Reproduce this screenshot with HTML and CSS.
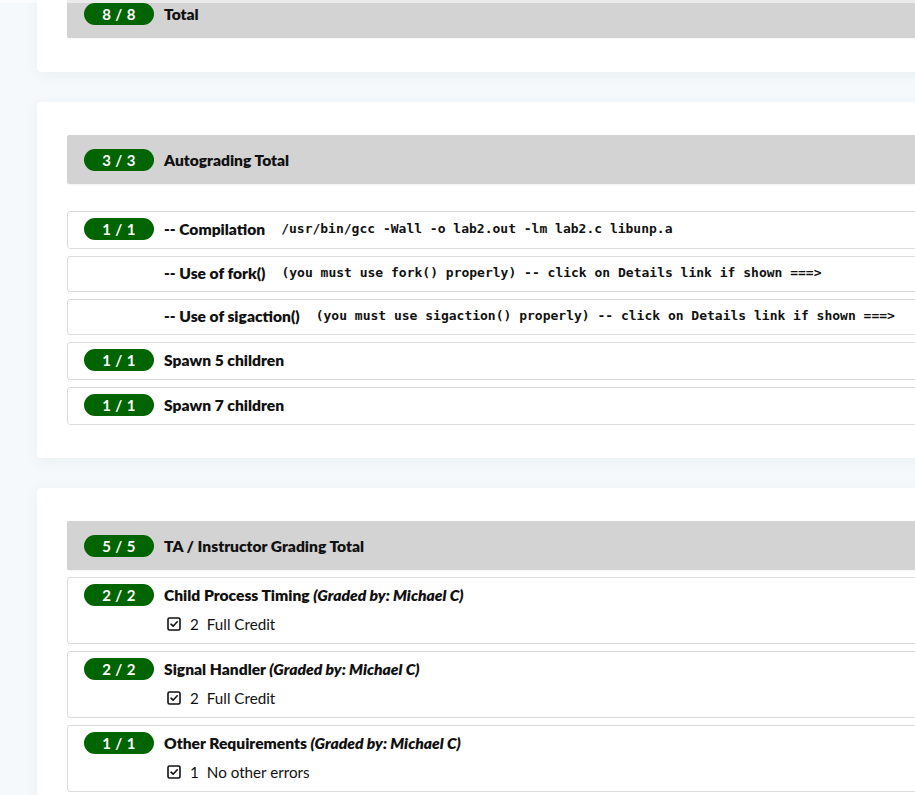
FILE: index.html
```html
<!DOCTYPE html>
<html lang="en">
<head>
<meta charset="utf-8">
<title>Grading Results</title>
<link rel="stylesheet" href="styles.css">
</head>
<body>
<div class="topedge"></div>
<main class="page">

  <section class="card card--first">
    <div class="band">
      <span class="badge">8 / 8</span>
      <span class="title">Total</span>
    </div>
  </section>

  <section class="card">
    <div class="band">
      <span class="badge">3 / 3</span>
      <span class="title">Autograding Total</span>
    </div>
    <div class="rows rows--spaced">
      <div class="row">
        <div class="head">
          <span class="badge">1 / 1</span>
          <span class="title">-- Compilation</span>
          <code class="code">/usr/bin/gcc -Wall -o lab2.out -lm lab2.c libunp.a</code>
        </div>
      </div>
      <div class="row">
        <div class="head">
          <span class="badge badge--empty"></span>
          <span class="title">-- Use of fork()</span>
          <code class="code">(you must use fork() properly) -- click on Details link if shown ===&gt;</code>
        </div>
      </div>
      <div class="row">
        <div class="head">
          <span class="badge badge--empty"></span>
          <span class="title">-- Use of sigaction()</span>
          <code class="code">(you must use sigaction() properly) -- click on Details link if shown ===&gt;</code>
        </div>
      </div>
      <div class="row">
        <div class="head">
          <span class="badge">1 / 1</span>
          <span class="title">Spawn 5 children</span>
        </div>
      </div>
      <div class="row">
        <div class="head">
          <span class="badge">1 / 1</span>
          <span class="title">Spawn 7 children</span>
        </div>
      </div>
    </div>
  </section>

  <section class="card">
    <div class="band">
      <span class="badge">5 / 5</span>
      <span class="title">TA / Instructor Grading Total</span>
    </div>
    <div class="rows">
      <div class="row">
        <div class="head">
          <span class="badge">2 / 2</span>
          <span class="title">Child Process Timing <em>(Graded by: Michael C)</em></span>
        </div>
        <div class="item">
          <svg class="check" viewBox="0 0 14 14" width="14" height="14" aria-hidden="true"><rect x="1" y="1" width="12" height="12" rx="1.5" fill="none" stroke="#111" stroke-width="1.6"/><path d="M4 7.2 L6.1 9.2 L10.2 4.8" fill="none" stroke="#111" stroke-width="1.6" stroke-linecap="round" stroke-linejoin="round"/></svg>
          <span class="pts">2</span>
          <span class="desc">Full Credit</span>
        </div>
      </div>
      <div class="row">
        <div class="head">
          <span class="badge">2 / 2</span>
          <span class="title">Signal Handler <em>(Graded by: Michael C)</em></span>
        </div>
        <div class="item">
          <svg class="check" viewBox="0 0 14 14" width="14" height="14" aria-hidden="true"><rect x="1" y="1" width="12" height="12" rx="1.5" fill="none" stroke="#111" stroke-width="1.6"/><path d="M4 7.2 L6.1 9.2 L10.2 4.8" fill="none" stroke="#111" stroke-width="1.6" stroke-linecap="round" stroke-linejoin="round"/></svg>
          <span class="pts">2</span>
          <span class="desc">Full Credit</span>
        </div>
      </div>
      <div class="row">
        <div class="head">
          <span class="badge">1 / 1</span>
          <span class="title">Other Requirements <em>(Graded by: Michael C)</em></span>
        </div>
        <div class="item">
          <svg class="check" viewBox="0 0 14 14" width="14" height="14" aria-hidden="true"><rect x="1" y="1" width="12" height="12" rx="1.5" fill="none" stroke="#111" stroke-width="1.6"/><path d="M4 7.2 L6.1 9.2 L10.2 4.8" fill="none" stroke="#111" stroke-width="1.6" stroke-linecap="round" stroke-linejoin="round"/></svg>
          <span class="pts">1</span>
          <span class="desc">No other errors</span>
        </div>
      </div>
    </div>
  </section>

</main>
</body>
</html>
```

FILE: styles.css
```css
html, body {
  margin: 0;
  padding: 0;
}

body {
  background: #f5f9fc;
  font-family: Lato, "Noto Sans", "Liberation Sans", sans-serif;
  font-size: 15.6px;
  color: #111;
  overflow: hidden;
}

.topedge {
  position: fixed;
  top: 0;
  left: 0;
  right: 0;
  height: 3px;
  background: rgba(255, 255, 255, 0.55);
  z-index: 5;
}

.page {
  width: 1200px;
  padding-left: 37px;
  display: flex;
  flex-direction: column;
  gap: 30px;
}

.card {
  background: #fff;
  border-radius: 4px;
  box-shadow: 0 3px 14px rgba(30, 60, 90, 0.06);
  padding: 33px 0 33px 30px;
}

.card--first {
  margin-top: -44px;
  padding-bottom: 34px;
}

.band {
  background: #d3d3d3;
  border-radius: 2px;
  height: 49px;
  display: flex;
  align-items: center;
  padding-left: 17px;
  box-shadow: 0 1px 2px rgba(0, 0, 0, 0.05);
}

.badge {
  flex: none;
  width: 70px;
  height: 22px;
  border-radius: 11px;
  background: #006400;
  color: #fff;
  font-weight: 700;
  font-size: 15px;
  display: inline-flex;
  align-items: center;
  justify-content: center;
  margin-right: 10px;
  letter-spacing: 0.4px;
}

.badge--empty {
  background: transparent;
  height: 20px;
}

.title {
  font-weight: 800;
  font-size: 15.6px;
  white-space: nowrap;
}

.title em {
  font-style: italic;
}

.rows {
  display: flex;
  flex-direction: column;
  gap: 7px;
  margin-top: 7px;
}

.rows--spaced {
  margin-top: 27px;
}

.row {
  border: 1px solid #dcdcdc;
  border-radius: 3px;
  padding: 6px 16px 8px;
  background: #fff;
}

.head {
  display: flex;
  align-items: center;
  line-height: 20px;
  min-height: 20px;
  white-space: nowrap;
}

.code {
  font-family: "DejaVu Sans Mono", "Liberation Mono", monospace;
  font-weight: 700;
  font-size: 13px;
  margin-left: 16px;
  white-space: pre;
}

.item {
  display: flex;
  align-items: center;
  height: 22px;
  margin-top: 7px;
  padding-left: 83px;
  font-size: 15.2px;
}

.check {
  flex: none;
  margin-right: 9px;
}

.pts {
  margin-right: 8px;
}
```
